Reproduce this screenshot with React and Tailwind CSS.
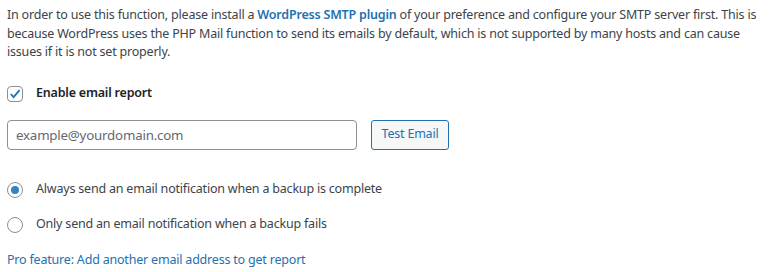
export default function App() {
  return (
    <div className="w-[771px] h-[272px] bg-white px-[7px] pt-[6px] text-[12.5px] tracking-[-0.2px] text-[#3c434a] font-['Noto_Sans',sans-serif]">
      <p className="leading-[18.5px] whitespace-nowrap">
        In order to use this function, please install a{' '}
        <a className="text-[#2271b1] font-semibold">WordPress SMTP plugin</a> of your preference and configure your SMTP server first. This is
        <br />
        because WordPress uses the PHP Mail function to send its emails by default, which is not supported by many hosts and can cause
        <br />
        issues if it is not set properly.
      </p>

      <label className="mt-[24px] flex items-center h-4">
        <span className="w-4 h-4 rounded-[4px] border border-[#8c8f94] flex items-center justify-center">
          <svg width="16" height="16" viewBox="0 0 20 20">
            <path d="M4 10l4 4.5 8.5-10" fill="none" stroke="#2271b1" strokeWidth="2.6" />
          </svg>
        </span>
        <span className="ml-[13px] font-semibold text-[#1d2327]">Enable email report</span>
      </label>

      <div className="mt-[18px] flex items-center">
        <input
          placeholder="example@yourdomain.com"
          className="w-[350px] h-[30px] rounded-[4px] border border-[#8c8f94] px-2 text-[13.3px] placeholder:text-[#646970] outline-none"
        />
        <button className="ml-[14px] h-[30px] w-[78px] rounded-[3px] border border-[#2271b1] bg-[#f6f7f7] text-[#2271b1]">
          Test Email
        </button>
      </div>

      <div className="mt-[32px] flex items-center h-4">
        <span className="w-4 h-4 rounded-full border border-[#8c8f94] flex items-center justify-center">
          <span className="w-2 h-2 rounded-full bg-[#3582c4]" />
        </span>
        <span className="ml-[13px]">Always send an email notification when a backup is complete</span>
      </div>

      <div className="mt-[19px] flex items-center h-4">
        <span className="w-4 h-4 rounded-full border border-[#8c8f94]" />
        <span className="ml-[13px]">Only send an email notification when a backup fails</span>
      </div>

      <a className="block mt-[18px] text-[#2271b1]">Pro feature: Add another email address to get report</a>
    </div>
  )
}
